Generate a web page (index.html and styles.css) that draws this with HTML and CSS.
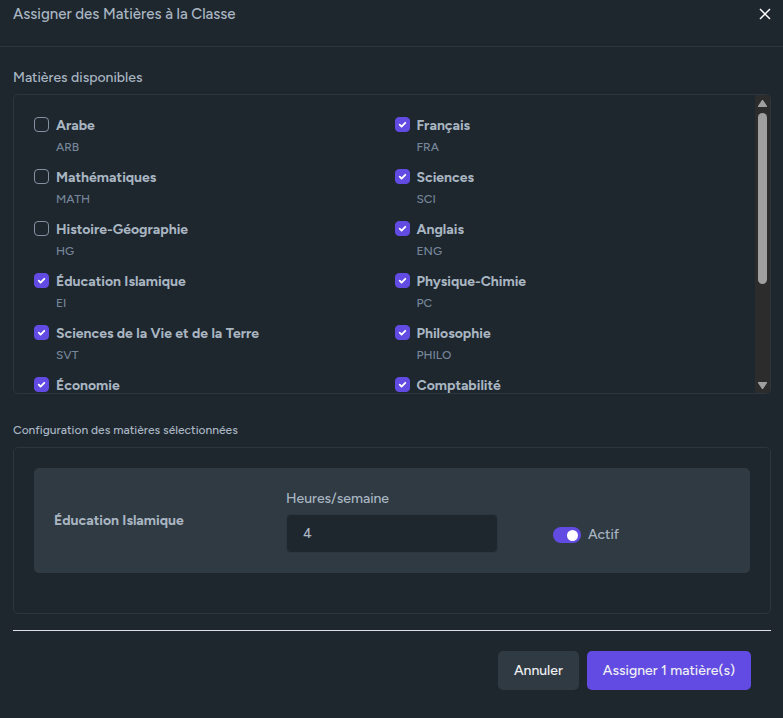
FILE: index.html
```html
<!DOCTYPE html>
<html lang="fr">
<head>
<meta charset="utf-8">
<meta name="viewport" content="width=device-width, initial-scale=1">
<title>Assigner des Matières à la Classe</title>
<link rel="stylesheet" href="styles.css">
</head>
<body>
<main class="modal">
  <header class="modal-header">
    <h1 class="modal-title">Assigner des Matières à la Classe</h1>
    <button class="close" type="button" aria-label="Fermer">
      <svg viewBox="0 0 12 12" width="12" height="12" aria-hidden="true"><path d="M1 1 11 11M11 1 1 11"/></svg>
    </button>
  </header>
  <form class="modal-body">
    <h2 class="section-title">Matières disponibles</h2>
    <div class="panel subjects">
      <div class="subject-list">
        <div class="subject"><input class="check" type="checkbox" id="arb"><label for="arb"><strong>Arabe</strong><small>ARB</small></label></div>
        <div class="subject"><input class="check" type="checkbox" id="fra" checked><label for="fra"><strong>Français</strong><small>FRA</small></label></div>
        <div class="subject"><input class="check" type="checkbox" id="math"><label for="math"><strong>Mathématiques</strong><small>MATH</small></label></div>
        <div class="subject"><input class="check" type="checkbox" id="sci" checked><label for="sci"><strong>Sciences</strong><small>SCI</small></label></div>
        <div class="subject"><input class="check" type="checkbox" id="hg"><label for="hg"><strong>Histoire-Géographie</strong><small>HG</small></label></div>
        <div class="subject"><input class="check" type="checkbox" id="eng" checked><label for="eng"><strong>Anglais</strong><small>ENG</small></label></div>
        <div class="subject"><input class="check" type="checkbox" id="ei" checked><label for="ei"><strong>Éducation Islamique</strong><small>EI</small></label></div>
        <div class="subject"><input class="check" type="checkbox" id="pc" checked><label for="pc"><strong>Physique-Chimie</strong><small>PC</small></label></div>
        <div class="subject"><input class="check" type="checkbox" id="svt" checked><label for="svt"><strong>Sciences de la Vie et de la Terre</strong><small>SVT</small></label></div>
        <div class="subject"><input class="check" type="checkbox" id="philo" checked><label for="philo"><strong>Philosophie</strong><small>PHILO</small></label></div>
        <div class="subject"><input class="check" type="checkbox" id="eco" checked><label for="eco"><strong>Économie</strong></label></div>
        <div class="subject"><input class="check" type="checkbox" id="compta" checked><label for="compta"><strong>Comptabilité</strong></label></div>
      </div>
      <div class="scrollbar" aria-hidden="true">
        <svg class="arrow" viewBox="0 0 9 7" width="9" height="7"><path d="M4 0h1l4 6v1H0V6z"/></svg>
        <div class="track"><div class="thumb"></div></div>
        <svg class="arrow" viewBox="0 0 9 7" width="9" height="7"><path d="M4 7h1l4-6V0H0v1z"/></svg>
      </div>
    </div>

    <h2 class="section-title section-title-small">Configuration des matières sélectionnées</h2>
    <div class="panel config">
      <div class="config-card">
        <strong>Éducation Islamique</strong>
        <div class="field">
          <label for="hours">Heures/semaine</label>
          <input class="hours" id="hours" type="text" inputmode="numeric" value="4">
        </div>
        <div class="active">
          <input class="switch" type="checkbox" role="switch" id="active" checked>
          <label for="active">Actif</label>
        </div>
      </div>
    </div>

    <footer class="actions">
      <button class="btn" type="button">Annuler</button>
      <button class="btn btn-primary" type="submit">Assigner 1 matière(s)</button>
    </footer>
  </form>
</main>
</body>
</html>
```
FILE: styles.css
```css
* {
  box-sizing: border-box;
}

body {
  margin: 0;
  min-height: 100vh;
  background: #1e262e;
  color: #a9b6c2;
  font-family: Figtree, Lato, "Liberation Sans", sans-serif;
  font-size: 14px;
  font-weight: 500;
  line-height: 20px;
}

h1, h2 {
  margin: 0;
  font-weight: 500;
}

button, input {
  font: inherit;
}

strong {
  font-weight: 700;
}

.modal-header {
  display: flex;
  justify-content: space-between;
  align-items: flex-start;
  padding: 4px 12px 22px 13px;
  border-bottom: 1px solid #2a3640;
}

.modal-title {
  font-size: 15px;
}

.close {
  display: flex;
  margin: 4px 0 0;
  padding: 0;
  border: 0;
  background: none;
}

.close path {
  fill: none;
  stroke: #fff;
  stroke-width: 1.5;
}

.modal-body {
  padding: 21px 12px 24px 13px;
}

.section-title {
  margin-bottom: 6px;
  font-size: 14px;
}

.section-title-small {
  margin: 26px 0 7px;
  font-size: 12px;
}

.panel {
  border: 1px solid #2a3640;
  border-radius: 5px;
}

.subjects {
  display: flex;
  height: 300px;
  overflow: hidden;
}

.subject-list {
  flex: 1;
  display: grid;
  grid-template-columns: 1fr 1fr;
  grid-auto-rows: 42px;
  gap: 10px 20px;
  align-content: start;
  padding: 21px 20px 20px;
  overflow-y: auto;
  scrollbar-width: none;
}

.subject {
  display: flex;
  align-items: flex-start;
  gap: 7px;
}

.subject label {
  display: flex;
  flex-direction: column;
  gap: 1px;
}

.subject small {
  color: #76869a;
  font-size: 12px;
}

.check {
  appearance: none;
  flex: none;
  width: 15px;
  height: 15px;
  margin: 1px 0 0;
  border: 1px solid #8391a2;
  border-radius: 4px;
}

.check:checked {
  border-color: #624be3;
  background: #624be3 url("data:image/svg+xml,%3Csvg xmlns='http://www.w3.org/2000/svg' viewBox='0 0 14 14'%3E%3Cpath d='M4 7.2 6 9.2 10 5.2' fill='none' stroke='white' stroke-width='2' stroke-linecap='round' stroke-linejoin='round'/%3E%3C/svg%3E") center / 13px no-repeat;
}

.scrollbar {
  display: flex;
  flex-direction: column;
  align-items: center;
  gap: 6px;
  width: 15px;
  padding: 5px 0 4px;
  background: #2c2c2c;
}

.arrow {
  flex: none;
  fill: #9f9f9f;
}

.track {
  flex: 1;
  width: 9px;
}

.thumb {
  height: 65%;
  border-radius: 5px;
  background: #9f9f9f;
}

.config {
  padding: 20px 20px 40px;
}

.config-card {
  display: grid;
  grid-template-columns: repeat(3, 1fr);
  align-items: center;
  gap: 20px;
  padding: 20px;
  border-radius: 5px;
  background: #303a43;
}

.field {
  display: flex;
  flex-direction: column;
  gap: 6px;
}

.field label {
  line-height: 22px;
}

.field {
  gap: 4px;
}

.hours {
  width: 100%;
  height: 39px;
  padding: 0 16px;
  border: 1px solid #2a3640;
  border-radius: 5px;
  background: #1e262e;
  color: inherit;
}

.active {
  display: flex;
  align-items: center;
  gap: 7px;
  padding: 29px 0 0 35px;
}

.switch {
  appearance: none;
  display: flex;
  justify-content: flex-end;
  align-items: center;
  width: 28px;
  height: 16px;
  margin: 0;
  padding: 0 3px;
  border-radius: 8px;
  background: #624be3;
}

.switch::before {
  content: "";
  width: 11px;
  height: 11px;
  border-radius: 50%;
  background: #fff;
}

.switch:not(:checked) {
  justify-content: flex-start;
  background: #8391a2;
}

.actions {
  display: flex;
  justify-content: flex-end;
  gap: 8px;
  margin-top: 16px;
  padding: 20px 20px 0;
  border-top: 1px solid #dee2e6;
}

.btn {
  height: 39px;
  padding: 0 16px;
  border: 0;
  border-radius: 5px;
  background: #303a43;
  color: #eef0f2;
}

.btn-primary {
  background: #624be3;
}
```
